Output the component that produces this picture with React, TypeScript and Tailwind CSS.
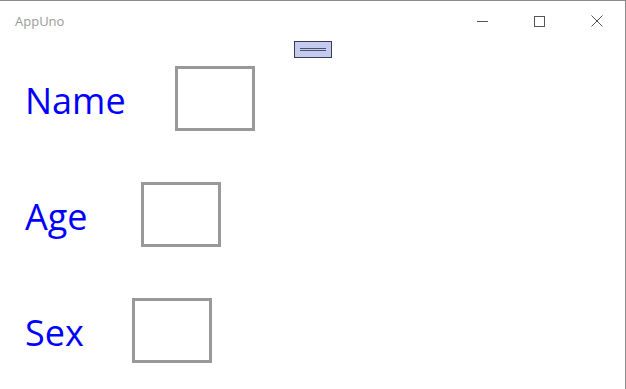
import React from "react";

const rows = [
  { label: "Name", gap: "gap-[49px]" },
  { label: "Age", gap: "gap-[53px]" },
  { label: "Sex", gap: "gap-[48px]" },
];

const TitleBar = () => (
  <div className="flex h-[40px] items-center justify-between">
    <span className="pl-[15px] pt-[2px] text-[13px] text-[#9a9a9a]">AppUno</span>
    <div className="flex h-full items-center">
      <div className="flex h-full w-[57px] items-center justify-center">
        <div className="h-px w-[11px] bg-[#555]" />
      </div>
      <div className="flex h-full w-[57px] items-center justify-center">
        <div className="h-[11px] w-[11px] border border-[#555]" />
      </div>
      <div className="flex h-full w-[57px] items-center justify-center">
        <svg width="12" height="12" viewBox="0 0 12 12">
          <path d="M0.5 0.5 L11.5 11.5 M11.5 0.5 L0.5 11.5" stroke="#555" strokeWidth="1" fill="none" />
        </svg>
      </div>
    </div>
  </div>
);

export default function App() {
  return (
    <div
      className="h-[389px] w-[626px] overflow-hidden border-t border-r border-[#8a8a8a] bg-white"
      style={{ fontFamily: '"Open Sans", "Noto Sans", sans-serif' }}
    >
      <TitleBar />
      <div className="flex justify-center">
        <div className="flex h-[17px] w-[38px] flex-col items-center justify-center gap-px border border-[#3a3a5a] bg-[#c5cbef]">
          <div className="h-px w-[26px] bg-[#4a4f70]" />
          <div className="h-px w-[26px] bg-[#4a4f70]" />
        </div>
      </div>
      <div className="flex flex-col gap-[51px] pl-[25px] pt-[8px]">
        {rows.map((r) => (
          <div key={r.label} className={`flex items-center ${r.gap}`}>
            <span className="mt-[4px] text-[36px] leading-none text-[#0000ff]">{r.label}</span>
            <div className="h-[65px] w-[80px] border-[3px] border-[#999]" />
          </div>
        ))}
      </div>
    </div>
  );
}
